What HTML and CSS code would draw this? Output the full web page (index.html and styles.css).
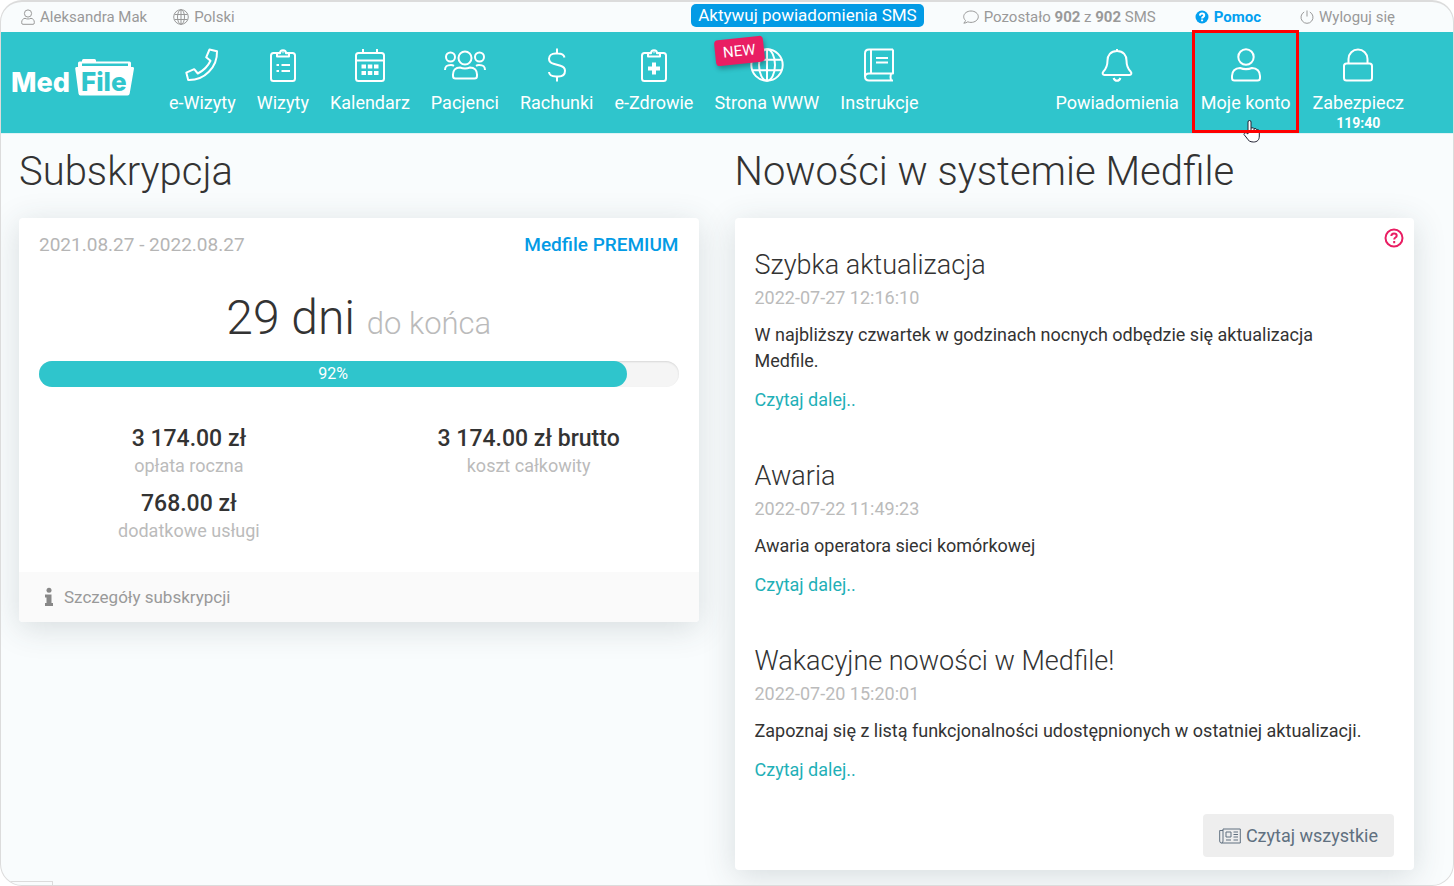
FILE: index.html
```html
<!DOCTYPE html>
<html lang="pl">
<head>
<meta charset="utf-8">
<title>Medfile</title>
<link rel="stylesheet" href="styles.css">
</head>
<body>
<div class="frame">
  <div class="topbar">
    <a class="top-link" href="#"><svg class="ic-sm" viewBox="0 0 14 16"><circle cx="7" cy="4.5" r="3.6"/><path d="M4 9.3C2 9.6.7 11 .7 13.300V14q0 1.300 1.300 1.300h10q1.300 0 1.300-1.300v-.7c0-2.300-1.300-3.700-3.300-4-2 .9-4 .9-6 0z"/></svg>Aleksandra Mak</a>
    <a class="top-link" href="#"><svg class="ic-md" viewBox="0 0 16 16"><circle cx="8" cy="8" r="7.300"/><ellipse cx="8" cy="8" rx="3.500" ry="7.300"/><path d="M1.500 5.500h13M1.500 10.500h13M8 .7v14.600"/></svg>Polski</a>
    <div class="top-right">
      <button class="sms" type="button">Aktywuj powiadomienia SMS</button>
      <span class="top-link"><svg class="ic-md" viewBox="0 0 16 16"><path d="M8 2c4 0 7.300 2.500 7.300 5.700S12 13.400 8 13.400c-1.200 0-2.200-.2-3.200-.6-1.100.8-2.400 1.300-4 1.400 1-1 1.500-1.900 1.700-2.800C1.300 10.400.7 9.100.7 7.700.7 4.500 4 2 8 2z"/></svg><span>Pozostało <b>902</b> z <b>902</b> SMS</span></span>
      <a class="top-link help" href="#"><svg class="ic-sm" viewBox="0 0 14 16"><circle class="fill" cx="7" cy="8" r="6.500"/><path class="mark" d="M4.900 6.600c.1-1.300 1-2 2.200-2s2.100.7 2.100 1.800c0 1.500-2.100 1.400-2.100 3M7.100 10.600v1.600"/></svg>Pomoc</a>
      <a class="top-link" href="#"><svg class="ic-sm" viewBox="0 0 14 16"><path d="M7 1.500v6M4.200 3A6 6 0 1 0 9.800 3"/></svg>Wyloguj się</a>
    </div>
  </div>

  <nav class="nav">
    <a class="logo" href="#" aria-label="Medfile">
      <svg viewBox="0 0 124 42">
        <path class="w" d="M66 10V6q0-1.500 1.500-1.500H70V3.500q0-1.500 1.500-1.500h11Q84 2 84 3.500v1h33.500q1.500 0 1.500 1.500v4h1.800q1.500 0 1.200 1.600l-4.300 25q-.3 1.900-2.100 1.900H68.500q-1.800 0-2-1.900L63.200 11.600Q63 10 64.500 10z"/>
        <path class="gap" d="M70 6.500h46V9H70z"/>
        <text class="med" x="-1" y="35">Med</text>
        <text class="file" x="69" y="34">File</text>
      </svg>
    </a>
    <a class="item" href="#"><svg viewBox="0 0 34 34"><path d="M24.500 1.500l7.500 1.700C32.500 19 19.500 32.500 3.200 32L1.300 24.600l7.900-3.400 3.600 4.300c6-3 10-7 12.700-12.700l-4.300-3.500z"/></svg><span>e-Wizyty</span></a>
    <a class="item" href="#"><svg viewBox="0 0 34 34"><rect x="5" y="5" width="24" height="28" rx="2.500"/><path class="bg" d="M11 8.500V5.300h3a3 3 0 0 1 6 0h3v3.200z"/><path d="M16.500 4.200h1M15.500 17h8.500M15.500 23h8.500"/><path class="dots" d="M10.500 17h2.500M10.500 23h2.500"/></svg><span>Wizyty</span></a>
    <a class="item" href="#"><svg viewBox="0 0 34 34"><rect x="3" y="5" width="28" height="28" rx="2.500"/><path d="M3 12.500h28M10 1v4M24 1v4"/><path class="squares" d="M8.500 18.500h4.500M14.800 18.500h4.500M21 18.500h4.500M8.500 25h4.500M14.800 25h4.500M21 25h4.500"/></svg><span>Kalendarz</span></a>
    <a class="item" href="#"><svg class="wide" viewBox="0 0 42 34"><circle cx="21" cy="10" r="6.500"/><circle cx="6.500" cy="9" r="4.500"/><circle cx="35.500" cy="9" r="4.500"/><path d="M16 19.500c3.300 1.200 6.700 1.200 10 0 4.500 0 7 3 7 7V28q0 2.500-2.500 2.500h-19Q9 30.500 9 28v-1.500c0-4 2.500-7 7-7zM1 22c0-4 2-5 6-5 1 0 2 .2 3 .8M41 22c0-4-2-5-6-5-1 0-2 .2-3 .8"/></svg><span>Pacjenci</span></a>
    <a class="item" href="#"><svg viewBox="0 0 34 34"><path d="M17 .5v5M17 28.500v5M24.500 9.500C24 7 21.500 5.500 18 5.500h-2.500c-4 0-6.500 2.200-6.500 5.300 0 3 2 4.300 4.500 5l7 2c2.500.8 4.500 2.200 4.500 5 0 3.500-2.500 5.700-6.500 5.700H16c-4 0-6.800-1.700-7-4.500"/></svg><span>Rachunki</span></a>
    <a class="item" href="#"><svg viewBox="0 0 34 34"><rect x="5" y="5" width="24" height="28" rx="2.500"/><path class="bg" d="M11 8.500V5.300h3a3 3 0 0 1 6 0h3v3.200z"/><path d="M16.500 4.200h1"/><path class="plus" d="M17 14.500v12M11 20.500h12"/></svg><span>e-Zdrowie</span></a>
    <a class="item" href="#"><svg viewBox="0 0 34 34"><circle cx="17" cy="17" r="15.700"/><ellipse cx="17" cy="17" rx="8" ry="15.700"/><path d="M2.500 11.700h29M2.500 22.300h29M17 1.300v31.400"/></svg><span>Strona WWW</span><em class="new">NEW</em></a>
    <a class="item" href="#"><svg viewBox="0 0 34 34"><path d="M31 1.500H7q-4 0-4 4v23q0 4 4 4h24M31 1.500v24H7q-4 0-4 3.500M9 1.500v24M29 25.500q-1 3.500 0 7M14 10h12M14 14.500h12"/></svg><span>Instrukcje</span></a>
    <div class="nav-right">
      <a class="item" href="#"><svg viewBox="0 0 34 34"><path d="M17 1v2M17 3C10.500 3 7.500 7.500 7.500 12.500c0 6-1.500 8.500-4.300 11.300-1.200 1.500-.5 3.200 1.300 3.200h25c1.800 0 2.500-1.700 1.300-3.200-2.800-2.800-4.300-5.300-4.300-11.300C26.500 7.500 23.500 3 17 3zM13.500 30c1.500 3.700 5.500 3.700 7 0"/></svg><span>Powiadomienia</span></a>
      <a class="item current" href="#"><svg viewBox="0 0 34 34"><circle cx="17" cy="9" r="7.700"/><path d="M11 20c4 1.500 8 1.500 12 0 5 0 8 3.500 8 8v2q0 2.500-2.500 2.500h-23Q3 32.500 3 30v-2c0-4.500 3-8 8-8z"/></svg><span>Moje konto</span>
        <svg class="cursor" viewBox="0 0 18 24"><path d="M5 15V3q0-1.500 1.500-1.500T8 3v6q3-.8 3 .7 2.700-.7 2.700 1 2.600-.4 2.600 1.500V17c0 4-2 6-6 6-3.500 0-5-1.500-6.500-4L1 15.500c0-2 2-2.300 4-.5zM8 9v4M11 9.700V13M13.700 10.700V13"/></svg></a>
      <a class="item" href="#"><svg viewBox="0 0 34 34"><rect x="3" y="15.500" width="28" height="17" rx="2.500"/><path d="M7.500 15.500V11a9.500 9.500 0 0 1 19 0v4.500"/></svg><span>Zabezpiecz</span><b class="timer">119:40</b></a>
    </div>
  </nav>

  <main class="main">
    <section>
      <h1>Subskrypcja</h1>
      <div class="card">
        <div class="sub-body">
          <div class="sub-head"><span>2021.08.27 - 2022.08.27</span><a href="#">Medfile PREMIUM</a></div>
          <div class="days">29 dni <small>do końca</small></div>
          <div class="progress"><div class="bar" style="width:92%">92%</div></div>
          <div class="costs">
            <div><strong>3 174.00 zł</strong><span>opłata roczna</span></div>
            <div><strong>3 174.00 zł brutto</strong><span>koszt całkowity</span></div>
            <div><strong>768.00 zł</strong><span>dodatkowe usługi</span></div>
          </div>
        </div>
        <a class="details" href="#"><svg viewBox="0 0 10 20"><circle cx="5" cy="3.300" r="2.500"/><path d="M1 7.500h6.500v8.500H9v3H1v-3h1.500v-5.500H1z"/></svg>Szczegóły subskrypcji</a>
      </div>
    </section>

    <section>
      <h1>Nowości w systemie Medfile</h1>
      <div class="card news">
        <button class="hint" type="button" aria-label="Pomoc"><svg viewBox="0 0 20 20"><circle cx="10" cy="10" r="8.500"/><path d="M7.300 8c.1-1.800 1.200-2.600 2.700-2.600s2.700.9 2.700 2.300c0 2-2.500 1.700-2.500 3.800M10.200 13v2.200"/></svg></button>
        <article>
          <h2>Szybka aktualizacja</h2>
          <time>2022-07-27 12:16:10</time>
          <p>W najbliższy czwartek w godzinach nocnych odbędzie się aktualizacja Medfile.</p>
          <a href="#">Czytaj dalej..</a>
        </article>
        <article>
          <h2>Awaria</h2>
          <time>2022-07-22 11:49:23</time>
          <p>Awaria operatora sieci komórkowej</p>
          <a href="#">Czytaj dalej..</a>
        </article>
        <article>
          <h2>Wakacyjne nowości w Medfile!</h2>
          <time>2022-07-20 15:20:01</time>
          <p>Zapoznaj się z listą funkcjonalności udostępnionych w ostatniej aktualizacji.</p>
          <a href="#">Czytaj dalej..</a>
        </article>
        <button class="all" type="button"><svg viewBox="0 0 22 16"><path d="M4 1h17.300v14H2.500Q.7 15 .7 13V2.500H4M4 1v12q0 2-1.500 2M7 4h5v5H7zM14.500 4H19M14.500 6.500H19M14.500 9H19M7 12h5M14.500 12H19"/></svg>Czytaj wszystkie</button>
      </div>
    </section>
  </main>
  <div class="status"></div>
</div>
</body>
</html>
```

FILE: styles.css
```css
* { box-sizing: border-box; }
body {
  margin: 0;
  background: #fff;
  color: #333;
  font: 18px/26px Roboto, "Liberation Sans", sans-serif;
}
a { color: inherit; text-decoration: none; }
button { font: inherit; border: 0; cursor: pointer; }
svg { fill: none; stroke: currentColor; flex: none; }

.frame {
  position: relative;
  min-height: 100vh;
  border: 1px solid #dcdcdc;
  border-top: 2px solid #dcdcdc;
  border-radius: 22px;
  background: #f9fcfd;
  overflow: hidden;
}

.topbar {
  display: flex;
  align-items: center;
  gap: 26px;
  height: 30px;
  padding: 0 58px 0 20px;
  color: #999;
  font-size: 15px;
  white-space: nowrap;
}
.top-link { display: flex; align-items: center; gap: 5px; }
.top-right { display: flex; align-items: center; gap: 39px; margin-left: auto; }
.ic-sm { width: 14px; height: 16px; }
.ic-md { width: 16px; height: 16px; }
.sms {
  height: 23px;
  margin-bottom: 3px;
  padding: 0 7px;
  border-radius: 5px;
  background: #039be5;
  color: #fff;
  font-size: 17px;
  line-height: 23px;
}
.help { color: #03a0f0; font-weight: 700; }
.fill { fill: #03a0f0; stroke: none; }
.mark { stroke: #fff; stroke-width: 2; }

.nav {
  display: flex;
  gap: 1px;
  height: 102px;
  padding: 0 39px 0 11px;
  background: #2fc5cc;
  border-bottom: 1px solid #dff3f5;
  color: #fff;
  font-size: 18px;
  white-space: nowrap;
}
.logo { width: 124px; margin: 25px 22px 0 0; }
.logo svg { display: block; width: 124px; height: 42px; stroke: none; }
.w, .med { fill: #fff; }
.gap { fill: #2fc5cc; }
.med, .file { font-family: Inter, sans-serif; font-weight: 800; font-size: 27px; }
.file { fill: #2fc5cc; font-weight: 800; font-size: 26px; }
.item {
  position: relative;
  display: flex;
  flex-direction: column;
  align-items: center;
  padding: 16px 10px 0;
}
.item > svg { width: 34px; height: 34px; stroke-width: 2; margin-bottom: 8px; stroke-linejoin: round; }
.item > .wide { width: 42px; }
.nav-right { display: flex; gap: 2px; margin-left: auto; }
.bg { fill: #2fc5cc; }
.dots { stroke-width: 2; }
.squares { stroke-width: 4; }
.plus { stroke-width: 4; }
.new {
  position: absolute;
  top: 6px;
  left: 11px;
  padding: 0 8px;
  border-radius: 4px;
  background: #e91e63;
  box-shadow: 1px 3px 5px rgba(0, 0, 0, .3);
  font-size: 15px;
  font-style: normal;
  transform: rotate(-6deg);
}
.current::after {
  content: "";
  position: absolute;
  inset: -2px 1px 0 1px;
  border: 3px solid #f00;
}
.item > .cursor {
  position: absolute;
  top: 87px;
  left: 52px;
  width: 18px;
  height: 24px;
  margin: 0;
  fill: #fff;
  stroke: #223;
  stroke-width: 1;
}
.timer { font-size: 14px; line-height: 14px; }

.main {
  display: grid;
  grid-template-columns: 1fr 1fr;
  gap: 36px;
  align-items: start;
  padding: 14px 39px 15px 18px;
}
h1 { margin: 0 0 22px; font-size: 40px; line-height: 48px; font-weight: 300; }
.card {
  position: relative;
  border-radius: 4px;
  background: #fff;
  box-shadow: 0 6px 32px rgba(50, 65, 70, .17);
}
.sub-body { padding: 14px 20px 29px; }
.sub-head { display: flex; justify-content: space-between; color: #b5b5b5; font-size: 19px; }
.sub-head a { color: #039be5; font-weight: 500; }
.days { margin: 31px 0 8px; font-size: 48px; line-height: 58px; font-weight: 300; text-align: center; }
.days small { font-size: 31px; color: #bbb; }
.progress {
  height: 26px;
  border-radius: 13px;
  background: #f5f5f5;
  box-shadow: inset 0 1px 2px rgba(0, 0, 0, .12);
}
.bar {
  height: 26px;
  border-radius: 13px;
  background: #2fc5cc;
  color: #fff;
  font-size: 16px;
  text-align: center;
}
.costs { display: grid; grid-template-columns: 1fr 1fr; row-gap: 12px; margin: 38px -20px 0; }
.costs > div {
  display: flex;
  flex-direction: column;
  align-items: center;
  color: #bbb;
}
.costs strong { color: #333; font-size: 23px; line-height: 28px; font-weight: 500; }
.costs span { line-height: 25px; }
.details {
  display: flex;
  align-items: center;
  gap: 10px;
  height: 50px;
  padding-left: 25px;
  border-radius: 0 0 4px 4px;
  background: #fafafa;
  color: #999;
  font-size: 17px;
}
.details svg { width: 10px; height: 20px; fill: #888; stroke: none; }

.news { display: flex; flex-direction: column; padding: 30px 20px 13px; }
.hint { position: absolute; top: 10px; right: 10px; width: 20px; height: 20px; padding: 0; background: none; color: #e91e63; }
.hint svg { display: block; width: 20px; height: 20px; stroke-width: 2; }
article { margin-bottom: 46px; }
h2 { margin: 0 0 3px; font-size: 27px; line-height: 34px; font-weight: 300; }
time { display: block; margin-bottom: 11px; color: #bbb; }
article p { margin: 0 0 13px; padding-right: 20px; }
article a { display: block; color: #1fb0b7; }
.all {
  display: flex;
  align-items: center;
  gap: 5px;
  height: 43px;
  margin-top: -15px;
  padding: 0 16px;
  align-self: flex-end;
  border-radius: 4px;
  background: #eee;
  color: #607080;
  font-size: 18px;
}
.all svg { width: 22px; height: 16px; stroke-width: 1; }
.status {
  position: absolute;
  left: 0;
  bottom: 0;
  width: 52px;
  height: 4px;
  border: 1px solid #dcdcdc;
  border-width: 1px 1px 0 0;
}
```
